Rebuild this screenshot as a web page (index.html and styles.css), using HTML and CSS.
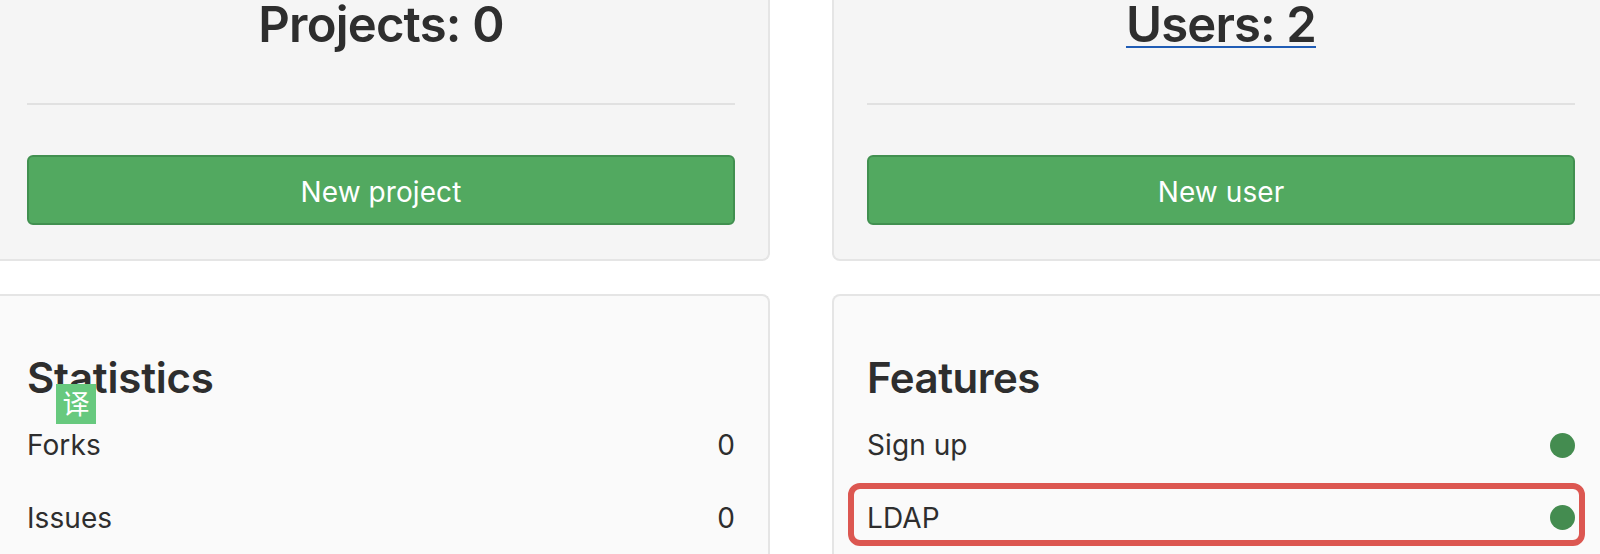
FILE: index.html
```html
<!DOCTYPE html>
<html lang="en">
<head>
<meta charset="utf-8">
<title>Admin dashboard</title>
<link rel="stylesheet" href="styles.css">
</head>
<body>
<main class="dashboard">
  <section class="card summary">
    <h2 class="count"><span class="projects">Projects: 0</span></h2>
    <hr class="divider">
    <a class="button">New project</a>
  </section>
  <section class="card summary">
    <h2 class="count"><span class="linked">Users: 2</span></h2>
    <hr class="divider">
    <a class="button">New user</a>
  </section>
  <section class="card details">
    <h3 class="title statistics">Statistics</h3>
    <div class="row"><span>Forks</span><span>0</span></div>
    <div class="row"><span>Issues</span><span>0</span></div>
    <span class="translate">译</span>
  </section>
  <section class="card details">
    <h3 class="title">Features</h3>
    <div class="row"><span>Sign up</span><i class="dot"></i></div>
    <div class="row"><span>LDAP</span><i class="dot"></i></div>
    <div class="highlight"></div>
  </section>
</main>
</body>
</html>
```
FILE: styles.css
```css
* { box-sizing: border-box; }
html, body { margin: 0; height: 554px; overflow: hidden; background: #fff; }
body { font-family: Inter, "Liberation Sans", sans-serif; color: #2e2e2e; }
.dashboard {
  display: grid;
  grid-template-columns: 778px 778px;
  grid-template-rows: 261px 260px;
  column-gap: 62px;
  row-gap: 33px;
  width: 1618px;
  height: 554px;
  overflow: hidden;
  margin-left: -8px;
}
.card { position: relative; border: 2px solid #e5e5e5; border-radius: 8px; padding: 0 33px; }
.summary { background: #f5f5f5; border-top: 0; border-radius: 0 0 8px 8px; }
.details { background: #fafafa; border-bottom: 0; border-radius: 8px 8px 0 0; }
.count { margin: 0; height: 103px; font-size: 49px; line-height: 49px; font-weight: 600; text-align: center; letter-spacing: -0.85px; }
.projects { letter-spacing: -0.8px; }
.linked { text-decoration: underline; text-decoration-color: #1f5cb5; text-decoration-thickness: 2px; text-underline-offset: 4px; text-decoration-skip-ink: none; }
.divider { margin: 0 0 50px; border: 0; height: 2px; background: #e1e1e1; }
.button { display: block; height: 70px; border: 2px solid #419050; border-radius: 6px; background: #52a960; color: #fff; font-size: 28px; line-height: 70px; letter-spacing: 0.08px; text-align: center; }
.title { margin: 0; padding-top: 57px; height: 113px; font-size: 42px; line-height: 50px; font-weight: 600; letter-spacing: -0.5px; }
.statistics { letter-spacing: -0.2px; }
.row { display: flex; align-items: center; justify-content: space-between; height: 72.5px; font-size: 28px; letter-spacing: 0.08px; }
.dot { width: 25px; height: 25px; border-radius: 50%; background: #448c50; }
.translate { position: absolute; left: 62px; top: 88px; width: 40px; height: 40px; background: #67c97e; color: #fff; font: 27px/38px "Noto Sans CJK SC", sans-serif; text-align: center; }
.highlight { position: absolute; left: 14px; top: 187px; width: 737px; height: 63px; border: 6px solid #dc5751; border-radius: 12px; }
```
